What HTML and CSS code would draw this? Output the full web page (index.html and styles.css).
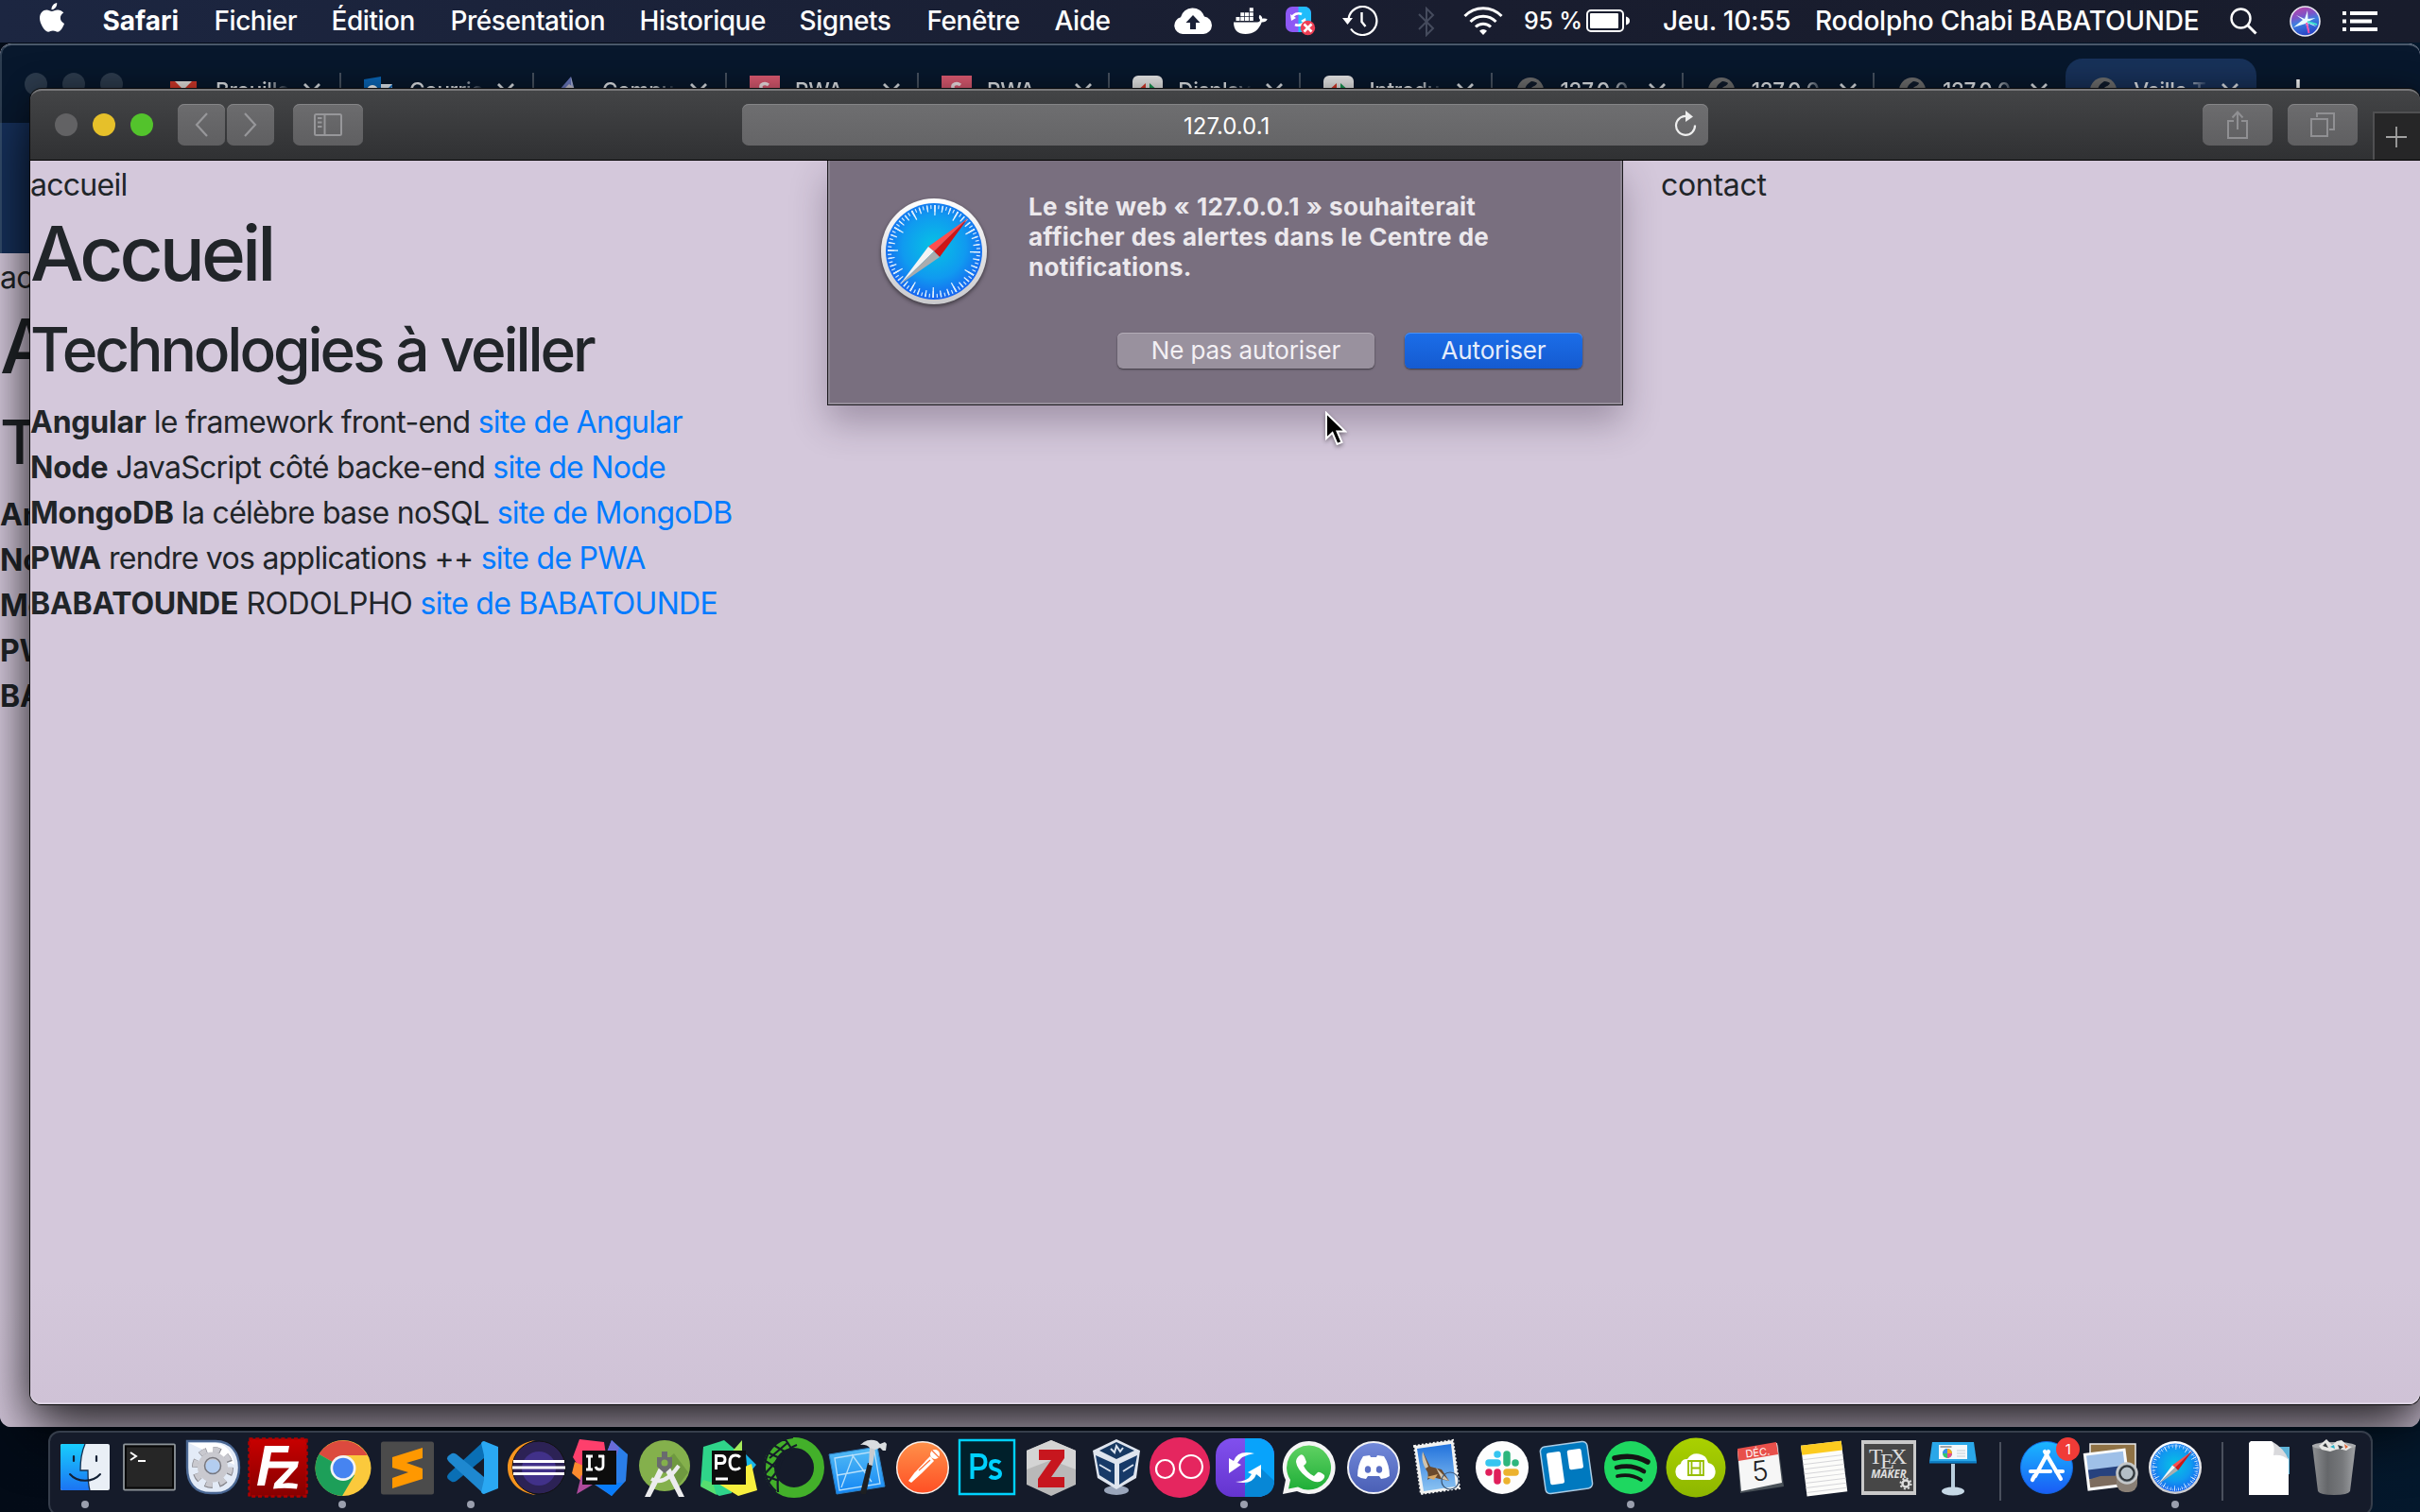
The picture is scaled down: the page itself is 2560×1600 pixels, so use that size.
FILE: index.html
```html
<!DOCTYPE html>
<html lang="fr">
<head>
<meta charset="utf-8">
<title>Veille Technologique</title>
<link rel="stylesheet" href="styles.css">
</head>
<body>
<svg class="defs" width="0" height="0" aria-hidden="true">
  <defs>
    <linearGradient id="gBlue" x1="0" y1="0" x2="0" y2="1"><stop offset="0" stop-color="#1ab7ff"/><stop offset="1" stop-color="#1a5cf5"/></linearGradient>
    <radialGradient id="gSafari" cx=".5" cy=".45" r=".55"><stop offset="0" stop-color="#06c3e4"/><stop offset=".6" stop-color="#109af0"/><stop offset="1" stop-color="#1764f0"/></radialGradient>
    <linearGradient id="gWhite" x1="0" y1="0" x2="0" y2="1"><stop offset="0" stop-color="#fff"/><stop offset="1" stop-color="#c9c9cc"/></linearGradient>
    <linearGradient id="gFinder" x1="0" y1="0" x2="0" y2="1"><stop offset="0" stop-color="#18cdfd"/><stop offset="1" stop-color="#1c74f3"/></linearGradient>
    <linearGradient id="gRed" x1="0" y1="0" x2="0" y2="1"><stop offset="0" stop-color="#c80000"/><stop offset="1" stop-color="#860000"/></linearGradient>
    <linearGradient id="gPost" x1="0" y1="0" x2="0" y2="1"><stop offset="0" stop-color="#ff914a"/><stop offset="1" stop-color="#ff4f24"/></linearGradient>
    <linearGradient id="gWa" x1="0" y1="0" x2="0" y2="1"><stop offset="0" stop-color="#5fd162"/><stop offset="1" stop-color="#1fae38"/></linearGradient>
    <linearGradient id="gDisc" x1="0" y1="0" x2="0" y2="1"><stop offset="0" stop-color="#7289da"/><stop offset="1" stop-color="#4a5fb5"/></linearGradient>
    <linearGradient id="gSky" x1="0" y1="0" x2="0" y2="1"><stop offset="0" stop-color="#2272dc"/><stop offset="1" stop-color="#8cc4f2"/></linearGradient>
    <linearGradient id="gTrash" x1="0" y1="0" x2="1" y2="0"><stop offset="0" stop-color="#8d8f92"/><stop offset=".35" stop-color="#65676a"/><stop offset=".7" stop-color="#77797c"/><stop offset="1" stop-color="#a0a2a5"/></linearGradient>
    <linearGradient id="gPurple" x1="0" y1="0" x2="0" y2="1"><stop offset="0" stop-color="#8150ee"/><stop offset="1" stop-color="#6434cf"/></linearGradient>
    <linearGradient id="gCloud" x1="0" y1="0" x2="0" y2="1"><stop offset="0" stop-color="#aad100"/><stop offset="1" stop-color="#8db600"/></linearGradient>
    <linearGradient id="gXcode" x1="0" y1="0" x2="0" y2="1"><stop offset="0" stop-color="#55bdf5"/><stop offset="1" stop-color="#1386f4"/></linearGradient>
    <linearGradient id="gSiri" x1="0" y1="0" x2=".3" y2="1"><stop offset="0" stop-color="#c8419f"/><stop offset=".4" stop-color="#7d54c8"/><stop offset=".6" stop-color="#3c7fe0"/><stop offset="1" stop-color="#2a49c9"/></linearGradient>
    <symbol id="safari" viewBox="0 0 112 112">
      <circle cx="56" cy="56" r="56" fill="url(#gWhite)"/>
      <circle cx="56" cy="56" r="51" fill="url(#gSafari)"/>
      <circle cx="56" cy="56" r="45.5" fill="none" stroke="#e6f3fd" stroke-width="7" stroke-dasharray="1.3 6.64"/>
      <circle cx="56" cy="56" r="43.5" fill="none" stroke="#e6f3fd" stroke-width="11" stroke-dasharray="1.4 21.38"/>
      <circle cx="56" cy="56" r="47" fill="none" stroke="#d5ebfc" stroke-width="4" stroke-dasharray="1.2 2.9"/>
      <path d="M92 21 50 51 56 56z" fill="#ff4e4e"/><path d="M92 21 62 62 56 56z" fill="#d01515"/>
      <path d="M20 91 50 51 56 56z" fill="#f4f4f4"/><path d="M20 91 62 62 56 56z" fill="#a9acae"/>
    </symbol>
    <symbol id="globe" viewBox="0 0 28 28"><circle cx="14" cy="14" r="14" fill="#6f6f6f"/><path d="M9 16c-2-5 1-9 6-12 3 0 5 1 6 2-1 3-4 3-6 5-1 3 1 5-1 7z" fill="#101b2c"/></symbol>
    <symbol id="close" viewBox="0 0 18 18"><path d="M1 1 17 17M17 1 1 17" stroke="#dfe3e8" stroke-width="2.8"/></symbol>
    <symbol id="sred" viewBox="0 0 32 32"><path fill="#dd5b72" d="M0 0h32v32H0z"/><path d="M20 10c-4-3-9-1-8 3s8 2 8 7-7 5-9 2" fill="none" stroke="#f7e9ec" stroke-width="3.4"/></symbol>
    <symbol id="goog" viewBox="0 0 32 32"><rect width="32" height="32" rx="6" fill="#e9e9e9"/><path d="M4 17 14 8v13z" fill="#d93b2b"/><path d="M28 17 18 8v13z" fill="#1b9a55"/></symbol>
  </defs>
</svg>

<header class="menubar">
  <svg class="apple" viewBox="0 0 26 31"><path d="M18.2 0c.3 2.100-.5 3.900-1.700 5.300-1.200 1.400-2.600 2-4 1.900-.2-2 .6-3.700 1.700-5C15.200.9 17 .1 18.200 0zM25.300 10.600c-2.300 1.400-3.400 3.100-3.400 5.500 0 2.800 1.700 4.800 4.100 5.800-.9 2.800-3.900 8.600-7 8.800-1.900 0-2.700-1.200-5-1.200s-3.200 1.100-5 1.200C5.600 30.900 0 22.200 0 16.300 0 10.500 3.700 7.500 7.300 7.500c2.200 0 4.100 1.400 5.500 1.400S16.800 7.300 19.300 7.500c1.900.1 4.400.9 6 3.100z" fill="#fff"/></svg>
  <span class="app">Safari</span>
  <span>Fichier</span>
  <span>Édition</span>
  <span>Présentation</span>
  <span>Historique</span>
  <span>Signets</span>
  <span>Fenêtre</span>
  <span>Aide</span>
  <svg width="40" height="28" viewBox="0 0 40 28"><path d="M9 28a9 9 0 0 1-2-17.700A13 13 0 0 1 32 9.500 9.300 9.300 0 0 1 31 28z" fill="#fff"/><path d="m20 8 7.500 8H23v7h-6v-7h-4.500z" fill="#1a2036"/></svg>
  <svg width="36" height="28" viewBox="0 0 36 28"><path d="M0 15.500h25c2 0 3-1 3-2.500-1.500-1.500-1.500-3.500-.4-5.200 1.800.9 2.600 2.200 2.700 3.900 2-.6 4-.3 5.400.6-1 2.300-3.300 3.400-6 3.200C26.500 24 21 28 12.500 28 4.500 28 0 24 0 15.500zM2.500 10h4v4h-4zM7.300 10h4v4h-4zM12 10h4v4h-4zM16.800 10h4v4h-4zM7.300 5.200h4v4h-4zM12 5.200h4v4h-4zM16.800 5.200h4v4h-4zM16.800.3h4v4h-4z" fill="#fff"/></svg>
  <svg class="low" width="32" height="32" viewBox="0 0 32 32"><rect width="27" height="27" rx="7" fill="#8d58f5"/><path d="M13.500 0H20a7 7 0 0 1 7 7v13a7 7 0 0 1-7 7h-6.500z" fill="#20bdfb"/><path d="M7 12c1-4 6-6 10-4M20 15c-1 4-6 6-10 4" fill="none" stroke="#fff" stroke-width="2.600"/><path d="m5 8 1 7 5-3zM22 19l-1-7-5 3z" fill="#fff"/><circle cx="23.500" cy="22.500" r="7.700" fill="#ee3f55"/><path d="m19.500 18.500 8 8m0-8-8 8" stroke="#fff" stroke-width="2.600"/></svg>
  <svg width="38" height="32" viewBox="0 0 38 32"><path d="M6.500 14A15 15 0 1 1 9 24.500" fill="none" stroke="#fff" stroke-width="2.200"/><path d="M0 13h11l-5.500 7z" fill="#fff"/><path d="M20.500 7v10l4 5" fill="none" stroke="#fff" stroke-width="2.400"/></svg>
  <svg class="low" width="18" height="32" viewBox="0 0 18 32"><path d="m1 8 15 15-7 7V2l7 7L1 24" fill="none" stroke="#454b5d" stroke-width="2"/></svg>
  <svg width="42" height="30" viewBox="0 0 42 30"><g fill="none" stroke="#fff" stroke-width="3"><path d="M1.500 10a27 27 0 0 1 39 0M7.500 16a19 19 0 0 1 27 0M13 21.500a11.500 11.500 0 0 1 16 0"/></g><path d="m21 30-4-4.200a5.500 5.500 0 0 1 8 0z" fill="#fff"/></svg>
  <span class="pct">95 %</span>
  <svg width="47" height="24" viewBox="0 0 47 24"><rect x="1" y="1" width="38" height="22" rx="4" fill="none" stroke="#fff" stroke-width="2"/><rect x="4" y="4" width="30" height="16" rx="1" fill="#fff"/><path d="M42 7.500c3 .5 4 2.500 4 4.500s-1 4-4 4.500z" fill="#fff"/></svg>
  <span class="clock">Jeu. 10:55</span>
  <span class="user">Rodolpho Chabi BABATOUNDE</span>
  <svg width="29" height="29" viewBox="0 0 29 29"><circle cx="11.500" cy="11.500" r="10" fill="none" stroke="#fff" stroke-width="2.400"/><path d="m18.500 18.500 9 9" stroke="#fff" stroke-width="3"/></svg>
  <svg width="33" height="33" viewBox="0 0 33 33"><circle cx="16.500" cy="16.500" r="15.500" fill="url(#gSiri)" stroke="#e9e9f2" stroke-width="1.600"/><path d="m4 23 10-8-7-5 9 4 3-9 .5 9 8-1-7 3.500 8 6-9-4 1.500 11-4-10.500z" fill="#e8fbff"/><path d="m18 18 2.500 11" stroke="#f04fb0" stroke-width="2" fill="none"/><path d="m19 17 10 3" stroke="#3fe0d0" stroke-width="2" fill="none"/></svg>
  <svg width="37" height="21" viewBox="0 0 37 21"><path d="M0 0h4v4H0zM0 8.500h4v4H0zM0 17h4v4H0zM8 0h29v4H8zM8 8.500h23v4H8zM8 17h29v4H8z" fill="#fff"/></svg>
</header>

<section class="win back">
  <div class="tabbar">
    <div class="lights"><i></i><i></i><i></i></div>
    <div class="tabs">
      <div class="tab"><svg class="fav low2" viewBox="0 0 28 22"><path fill="#e8e4e0" d="M0 0h28v22H0z"/><path d="M0 0h5l9 9 9-9h5v22h-5V8l-9 9-9-9v14H0z" fill="#d5392b"/></svg><span>Brouillo</span><svg class="x"><use href="#close"/></svg></div>
      <div class="tab"><svg class="fav out" viewBox="0 0 30 30"><path d="M12 8h18v16H12z" fill="#e8eef5"/><path d="m14 9 8 7 8-8v3l-8 8-8-7z" fill="#1b74c8"/><path d="M0 3 18 0v30L0 27z" fill="#0a67b8"/><circle cx="9" cy="15" r="4.500" fill="none" stroke="#fff" stroke-width="3"/></svg><span>Courrie</span><svg class="x"><use href="#close"/></svg></div>
      <div class="tab"><svg class="fav out" viewBox="0 0 30 30"><path d="M15 0v14L2 15z" fill="#6a78bd"/><path d="M15 0v18l4-3z" fill="#a6b0de"/><path d="m9 12 4-4 8 6v3H6z" fill="#c9c5d0"/></svg><span>Compu</span><svg class="x"><use href="#close"/></svg></div>
      <div class="tab"><svg class="fav sq"><use href="#sred"/></svg><span>PWA</span><svg class="x"><use href="#close"/></svg></div>
      <div class="tab"><svg class="fav sq"><use href="#sred"/></svg><span>PWA</span><svg class="x"><use href="#close"/></svg></div>
      <div class="tab"><svg class="fav sq"><use href="#goog"/></svg><span>Display</span><svg class="x"><use href="#close"/></svg></div>
      <div class="tab"><svg class="fav sq"><use href="#goog"/></svg><span>Introdu</span><svg class="x"><use href="#close"/></svg></div>
      <div class="tab"><svg class="fav gl"><use href="#globe"/></svg><span>127.0.0</span><svg class="x"><use href="#close"/></svg></div>
      <div class="tab"><svg class="fav gl"><use href="#globe"/></svg><span>127.0.0</span><svg class="x"><use href="#close"/></svg></div>
      <div class="tab"><svg class="fav gl"><use href="#globe"/></svg><span>127.0.0</span><svg class="x"><use href="#close"/></svg></div>
      <div class="tab on"><svg class="fav gl"><use href="#globe"/></svg><span>Veille T</span><svg class="x"><use href="#close"/></svg></div>
    </div>
    <svg class="newtab" viewBox="0 0 24 24"><path d="M12 0v24M0 12h24" stroke="#fff" stroke-width="3.500"/></svg>
  </div>
  <div class="toolbar"></div>
  <div class="page">
    <p class="nav">accueil</p>
    <h1>Accueil</h1>
    <h2>Technologies</h2>
    <ul><li><b>Angular</b></li><li><b>Node</b></li><li><b>MongoDB</b></li><li><b>PWA</b></li><li><b>BABATOUNDE</b></li></ul>
  </div>
</section>

<section class="win front">
  <div class="titlebar">
    <div class="lights"><i></i><i class="y"></i><i class="g"></i></div>
    <div class="btns">
      <div class="btn back-b"><svg width="14" height="26" viewBox="0 0 14 26"><path d="M13 1 2 13l11 12" fill="none" stroke="#97979a" stroke-width="2.200"/></svg></div>
      <div class="btn fwd"><svg width="14" height="26" viewBox="0 0 14 26"><path d="m1 1 11 12L1 25" fill="none" stroke="#97979a" stroke-width="2.200"/></svg></div>
    </div>
    <div class="btn side"><svg width="30" height="24" viewBox="0 0 30 24"><rect x="1" y="1" width="28" height="22" rx="1.500" fill="none" stroke="#97979a" stroke-width="2"/><path d="M11.500 1v22M4 5h4.500M4 9.500h4.500M4 14h4.500" stroke="#97979a" stroke-width="2"/></svg></div>
    <div class="url"><span>127.0.0.1</span><svg width="24" height="28" viewBox="0 0 24 28"><path d="M13.500 6A10 10 0 1 0 22 15.500" fill="none" stroke="#eee" stroke-width="2.200"/><path d="M12 0v12l8-5.500z" fill="#eee"/></svg></div>
    <div class="btn share"><svg width="24" height="30" viewBox="0 0 24 30"><path d="M8 11H2v18h20V11h-6M12 20V2M6.500 7.500 12 1.500l5.500 6" fill="none" stroke="#909093" stroke-width="2"/></svg></div>
    <div class="btn share"><svg width="26" height="26" viewBox="0 0 26 26"><path d="M1 7h17v18H1zM7 5V1h18v17h-5" fill="none" stroke="#909093" stroke-width="2"/></svg></div>
    <div class="plus"><svg width="22" height="22" viewBox="0 0 22 22"><path d="M11 0v22M0 11h22" stroke="#a2a2a2" stroke-width="1.800"/></svg></div>
  </div>
  <div class="page">
    <div class="navrow"><p class="nav">accueil</p><p class="nav">contact</p></div>
    <h1>Accueil</h1>
    <h2>Technologies à veiller</h2>
    <ul>
      <li><b>Angular</b> le framework front-end <a>site de Angular</a></li>
      <li><b>Node</b> JavaScript côté backe-end <a>site de Node</a></li>
      <li><b>MongoDB</b> la célèbre base noSQL <a>site de MongoDB</a></li>
      <li><b>PWA</b> rendre vos applications ++ <a>site de PWA</a></li>
      <li><b>BABATOUNDE</b> <span class="caps">RODOLPHO</span> <a>site de BABATOUNDE</a></li>
    </ul>
  </div>
  <div class="sheetclip">
    <div class="sheet">
      <svg class="logo"><use href="#safari"/></svg>
      <div class="msg">
        <p>Le site web « 127.0.0.1 » souhaiterait<br>afficher des alertes dans le Centre de<br>notifications.</p>
        <div class="acts"><div class="deny">Ne pas autoriser</div><div class="allow">Autoriser</div></div>
      </div>
    </div>
  </div>
</section>

<svg class="cursor" viewBox="0 0 24 38"><path d="M2 2v27l6.500-6 5 12 5-2-5-11.500H22z" fill="#000" stroke="#fff" stroke-width="2"/></svg>

<footer class="dock">
  <div class="it run"><svg viewBox="0 0 64 64"><rect x="6" y="7" width="52" height="49" rx="2" fill="#e9eff6"/><path d="M8 7h24c-4 9-5 18-5 28h8c0 8 0 14 2 21H8a2 2 0 0 1-2-2V9a2 2 0 0 1 2-2z" fill="url(#gFinder)"/><path d="M32 7c-4 9-5 18-5 28h8c0 8 0 14 2 21" fill="none" stroke="#17304f" stroke-width="1.300"/><path d="M20 20v5M44 20v5" stroke="#122034" stroke-width="2.200" stroke-linecap="round"/><path d="M16 39c8 9 24 9 32 0" fill="none" stroke="#122034" stroke-width="2" stroke-linecap="round"/></svg></div>
  <div class="it"><svg viewBox="0 0 64 64"><rect x="5" y="7.500" width="54" height="48" rx="1" fill="#262626" stroke="#8d9499" stroke-width="1.800"/><rect x="7" y="9.500" width="50" height="44" fill="none" stroke="#080808" stroke-width="2"/><path d="m12 16 6 4-6 4M20 25h8" fill="none" stroke="#fff" stroke-width="2"/></svg></div>
  <div class="it"><svg viewBox="0 0 64 64"><path d="M4 4h30c16 0 25 12 25 28S49 59 35 59h-6C12 59 4 48 4 32z" fill="#e3ebf7" stroke="#4a6793" stroke-width="2.400"/><path d="M6 6l48 23c-2-15-10-23-22-23z" fill="#fff"/><circle cx="31" cy="32" r="19" fill="none" stroke="#85858b" stroke-width="6" stroke-dasharray="8 6.920"/><circle cx="31" cy="31.500" r="18.500" fill="none" stroke="#c9c9cf" stroke-width="5.500" stroke-dasharray="7 7.530"/><circle cx="31" cy="31.500" r="12" fill="#b3cdf0" stroke="#c9c9cf" stroke-width="8"/><circle cx="31" cy="30" r="8.500" fill="none" stroke="#77777e" stroke-width="1.500"/></svg></div>
  <div class="it"><svg viewBox="0 0 64 64"><rect x="1.500" y="1.500" width="61" height="61" fill="url(#gRed)" stroke="#b00000" stroke-width="2.500" stroke-dasharray="4 2.780"/><path d="M10 51 18 9h26l-1.200 7H25l-1.700 9.500H54l-1.300 6L37 49q6-1.500 16 .500l-1 5q-14-1.500-25 0l1.300-6L44 32.500H22L18 51z" fill="#fff"/></svg></div>
  <div class="it run"><svg viewBox="0 0 64 64"><circle cx="32" cy="32.500" r="29.500" fill="#fbc93c"/><path d="M32 32.500 6.500 17.700A29.500 29.500 0 0 1 57.600 19H32z" fill="#dc4a3e"/><path d="M32 32.500 6.500 17.700A29.500 29.500 0 0 0 31 62l13-22z" fill="#1d9f59"/><circle cx="32" cy="32.500" r="13.500" fill="#f4f4f4"/><circle cx="32" cy="32.500" r="10.800" fill="#4684f1"/></svg></div>
  <div class="it"><svg viewBox="0 0 64 64"><rect x="4" y="4.500" width="56" height="56" rx="2.500" fill="#4b4b4b"/><path d="m48 11-32 10v11l17 5-17 6v11l32-10V33l-17-6 17-5z" fill="#ff9800"/></svg></div>
  <div class="it run"><svg viewBox="0 0 64 64"><path d="M45 4 8 38q-4 4 0 7l3 2q2 1 5-1L45 22z" fill="#0a6fb5"/><path d="M45 60 8 26q-4-4 0-7l3-2q2-1 5 1l29 24z" fill="#1e88d0"/><path d="M45 4 60 10v44l-15 6q-2 0-3-2l3-13V19L42 6q1-2 3-2z" fill="#2aa8f2"/></svg></div>
  <div class="it"><svg viewBox="0 0 64 64"><path d="M32 3C-8 8-8 56 32 61 4 54 4 10 32 3z" fill="#f7941e"/><circle cx="35" cy="32" r="28" fill="#2c2255" stroke="#111" stroke-width="1"/><circle cx="35" cy="33" r="18" fill="#413189"/><path d="M8 25.500h54M7 32h56M8 38.500h54" stroke="#fff" stroke-width="3"/></svg></div>
  <div class="it"><svg viewBox="0 0 64 64"><path d="m10 2 26 3 3 20-26 12-10-16z" fill="#fe3f6c"/><path d="m44 3 17 15-2 28-15 16-18-12z" fill="#2a7ee8"/><path d="m44 3 8 8-4 12H36z" fill="#6a6bd8"/><path d="M5 26 2 38l12 10V30z" fill="#fc8a2e"/><path d="m12 40-5 20 22-13z" fill="#af4b9c"/><path d="m26 48 18 14 12-14z" fill="#087cfa"/><path d="M13 14h36v36H13z" fill="#0d0d0d"/><path d="M17 20h7M17 34h7M20.500 20v14M35 19v11q0 4-4 4-3 0-4-3M30 20h6M17 44h12" fill="none" stroke="#fff" stroke-width="2.800"/></svg></div>
  <div class="it"><svg viewBox="0 0 64 64"><circle cx="32" cy="30" r="27" fill="#84b04c"/><path d="m34 24 8-7 15 20-12 16z" fill="#6f9940"/><path d="M11 63 29 26l6 0 18 37h-6L32 34 17 63z" fill="#ececee"/><path d="M18 44q14 8 29-14" fill="none" stroke="#ececee" stroke-width="4"/><path d="M29 15h6v6h5v10l-8 7-8-7V21h5z" fill="#6a6b6e"/><circle cx="32" cy="27" r="3.500" fill="#84b04c"/></svg></div>
  <div class="it"><svg viewBox="0 0 64 64"><path d="m5 10 22-7 14 12-6 44-13 3L2 51z" fill="#2fd48a"/><path d="m46 3-14 16 14 10z" fill="#a6ea5a"/><path d="m50 18 11 11-9 11z" fill="#16b6e8"/><path d="M16 46 56 28l6 28-20 6z" fill="#f7ef3e"/><path d="m5 45 10 3 4 13L2 52z" fill="#57de70"/><path d="M14 14h36v36H14z" fill="#0d0d0d"/><path d="M18.500 34V19.500H24q4 0 4 4t-4 4h-5M44 21q-2-2-5-2-6 0-6 7.500t6 7.500q3 0 5-2M18 44h13" fill="none" stroke="#fff" stroke-width="3"/></svg></div>
  <div class="it"><svg viewBox="0 0 64 64"><circle cx="32" cy="32" r="26.500" fill="none" stroke="#43b02a" stroke-width="11"/><path d="M31 0A32 32 0 0 0 13 57M35 8Q12 16 15 58M0 24l16 10M4 16l17 8M10 8l17 10M22 1l8 12M0 40l16 6M26 5 6 22M18 20 0 40M14 36 3 50" fill="none" stroke="#151b2a" stroke-width="2.200"/></svg></div>
  <div class="it"><svg viewBox="0 0 64 64"><path d="m1 18 51-8 8 42-51 8z" fill="url(#gXcode)" stroke="#2b7fc4"/><path d="m27 18-13 35M25 18l21 29M10 40l34-6M7 22l42-7 6 34-43 7z" fill="none" stroke="#b7e0fb" stroke-width="1.300"/><path d="m42 27 5 1-7 32q-4 1-6-1z" fill="#1d1f22"/><path d="m44 10 6 1-3 19-4-1z" fill="#c8ccd0"/><path d="M34 8q8-8 18-4l3 3 5-2 2 2-1 7h-3l-3-3-5 2-6-2q-4-4-10-3z" fill="#dadde0"/></svg></div>
  <div class="it"><svg viewBox="0 0 64 64"><circle cx="32" cy="32" r="27.300" fill="url(#gPost)" stroke="#f9efe9" stroke-width="1.500"/><circle cx="45" cy="18" r="5" fill="#fff"/><path d="M40 20 26 34 17 46l3 2 11-10 13-13z" fill="#fff"/><path d="m42 14 7 7M28 35l12-11M24 36l10-11" stroke="#ff7038" stroke-width="1.200"/></svg></div>
  <div class="it"><svg viewBox="0 0 64 64"><path d="M3 3h58v57H3z" fill="#00202b" stroke="#00d2ff" stroke-width="2.400"/><path d="M16.500 44V19h7q7 0 7 7t-7 7h-7M46 27q-2-2-5-2-5 0-5 4t5 5 5 4.500-5 4.500q-4 0-6-2" fill="none" stroke="#00d2ff" stroke-width="4"/></svg></div>
  <div class="it"><svg viewBox="0 0 64 64"><path d="m32 3 26 11v36L32 62 6 50V14z" fill="#b9b9b9"/><path d="m32 3 26 11v20L32 24 6 34V14z" fill="#d4d4d4"/><path d="M19 13h27v9L32 42h14v11H18v-9l14-20H19z" fill="#c7161e"/></svg></div>
  <div class="it"><svg viewBox="0 0 64 64"><ellipse cx="33" cy="56" rx="13" ry="5" fill="#9aa6bb"/><path d="m33 2 25 12-4 29-21 12-20-12L8 14z" fill="#dfe5ee"/><path d="m33 5 19 9-19 9-18-9z" fill="#173861"/><path d="m11 19 20 9v22L15 40zM55 19l-19 9v22l15-10z" fill="#173a68"/><path d="m27 12 4 4 2-7 4 6 3-4M15 29l12 7M40 36l11-7" fill="none" stroke="#d9e2ee" stroke-width="2"/></svg></div>
  <div class="it"><svg viewBox="0 0 64 64"><circle cx="32" cy="32" r="32" fill="#e5265f"/><circle cx="16.500" cy="33.500" r="9.500" fill="none" stroke="#fff" stroke-width="2.200"/><circle cx="44" cy="31" r="12" fill="none" stroke="#fff" stroke-width="2.200"/></svg></div>
  <div class="it run"><svg viewBox="0 0 64 64"><rect x="1" y="1" width="62" height="62" rx="18" fill="url(#gPurple)"/><path d="M32 1h13a18 18 0 0 1 18 18v26a18 18 0 0 1-18 18H32z" fill="#08a3fb"/><path d="m49 33 14 13q0 16-18 17h-13V51z" fill="#0787d6"/><path d="M42 17Q24 13 20 25l-5-3v16l13-9-4-2q4-8 18-10zM22 47q18 4 22-8l5 4V29l-14 8 4 2q-4 8-17 8z" fill="#fff"/></svg></div>
  <div class="it"><svg viewBox="0 0 64 64"><path d="M32 4a28 28 0 1 1-13 53L4 60l3-15A28 28 0 0 1 32 4z" fill="#f5f5f5"/><path d="M32 8.500a23.500 23.500 0 1 1-12 44l-10 2 2-9.500A23.500 23.500 0 0 1 32 8.500z" fill="url(#gWa)"/><path d="M22 19q3-2 5 2l2 5q0 2-3 4 3 7 11 11l4-4q2-1 7 3 1 3-3 6-6 4-16-4T18 26q0-4 4-7z" fill="#fff"/></svg></div>
  <div class="it"><svg viewBox="0 0 64 64"><circle cx="32" cy="32" r="27" fill="url(#gDisc)" stroke="#f2f2f5" stroke-width="2"/><path d="m21 20 7-1 1 2h6l1-2 7 1q6 9 6 21-4 3-9 3l-2-3H26l-2 3q-5 0-9-3 0-12 6-21z" fill="#fff"/><ellipse cx="26" cy="34" rx="3.200" ry="3.800" fill="#5c70c5"/><ellipse cx="38" cy="34" rx="3.200" ry="3.800" fill="#5c70c5"/></svg></div>
  <div class="it"><svg viewBox="0 0 64 64"><path d="m7 9 41-6 7 51-41 6z" fill="#f3f3f1" stroke="#f3f3f1" stroke-width="2" stroke-dasharray="2 2"/><path d="m10 12 36-5 5 45-34 5z" fill="url(#gSky)"/><path d="m16 15 8 16 12 3 8 12-10-2-8-2-5 3q2-7-2-12z" fill="#6b4a2c"/><path d="m16 15 6 16-3 2q-5-8-3-18zM30 32l14 14-8-2z" fill="#cfc3ae"/><path d="m20 42 12-3-4 6z" fill="#d8a968"/><circle cx="45" cy="46" r="9" fill="none" stroke="#3b5675" stroke-width="1.200"/></svg></div>
  <div class="it"><svg viewBox="0 0 64 64"><circle cx="32" cy="32" r="28" fill="#fdfdfd"/><g stroke-width="7.500" stroke-linecap="round"><path d="M18 27h9" stroke="#36c5f0"/><path d="M27 18v.1" stroke="#36c5f0"/><path d="M37 18v9" stroke="#2eb67d"/><path d="M46 27v.1" stroke="#2eb67d"/><path d="M37 37h9" stroke="#ecb22e"/><path d="M37 46v.1" stroke="#ecb22e"/><path d="M27 37v9" stroke="#e01e5a"/><path d="M18 37v.1" stroke="#e01e5a"/></g></svg></div>
  <div class="it"><svg viewBox="0 0 64 64"><g transform="rotate(-8 32 32)"><rect x="7" y="7" width="50" height="50" rx="5" fill="#0079bf" stroke="#a9cbe4" stroke-width="1.500"/><rect x="13" y="14" width="15" height="34" rx="2" fill="#fff"/><rect x="35" y="14" width="15" height="21" rx="2" fill="#fff"/></g></svg></div>
  <div class="it run"><svg viewBox="0 0 64 64"><circle cx="32" cy="32" r="28" fill="#1ed760"/><g fill="none" stroke="#141414" stroke-linecap="round"><path d="M15 22q19-5 35 4" stroke-width="5.500"/><path d="M17 32q16-4 29 4" stroke-width="4.600"/><path d="M18 41q14-3 25 4" stroke-width="3.800"/></g></svg></div>
  <div class="it"><svg viewBox="0 0 64 64"><circle cx="32" cy="32" r="31.500" fill="url(#gCloud)"/><path d="M17 45a9 9 0 0 1-1-17 6 6 0 0 1 7-5 12 12 0 0 1 22 4 9.500 9.500 0 0 1 2 18z" fill="#fff"/><path d="M24 25h16v15H24zM27.500 25v15M36.500 25v15M27.500 32.500h9" fill="none" stroke="#97be04" stroke-width="1.800"/></svg></div>
  <div class="it"><svg viewBox="0 0 64 64"><path d="m8 16 3 43 46-7-6-44z" fill="#4a5259"/><path d="m8 14 42-8 5 42-43 9z" fill="#f6f6f6"/><path d="m8 12 41-7 2 13-42 7z" fill="#e8504b"/><g transform="rotate(-7 30 30)"><text x="31" y="20" class="t-mon">DÉC.</text><text x="31" y="46" class="t-day">5</text></g></svg></div>
  <div class="it"><svg viewBox="0 0 64 64"><g transform="rotate(-7 32 32)"><path d="M10 6h43v54H10z" fill="#fcfcfa"/><path d="M10 6h43v10H10z" fill="#fccb1f"/><path d="M10 21h43M10 26h43M10 31h43M10 36h43M10 41h43M10 46h43M10 51h43M10 56h43" stroke="#d5d5d8" stroke-width="1"/></g></svg></div>
  <div class="it"><svg viewBox="0 0 64 64"><path d="M3 3h58v58H3z" fill="#c9c9c9"/><path d="M6 7h52v50H6z" fill="#474747"/><text x="11" y="28" class="t-tex">T</text><text x="23" y="33" class="t-tex">E</text><text x="34" y="28" class="t-tex">X</text><text x="32" y="42.500" class="t-mak">MAKER</text><circle cx="50" cy="49" r="3.500" fill="none" stroke="#ddd" stroke-width="2.500"/><circle cx="50" cy="49" r="5.500" fill="none" stroke="#ddd" stroke-width="2" stroke-dasharray="2 2.300"/></svg></div>
  <div class="it"><svg viewBox="0 0 64 64"><path d="M30 28h4v30h-4z" fill="#b9cedd"/><ellipse cx="32" cy="57" rx="12" ry="4.500" fill="#c6d8e5"/><path d="M10 5h44l3 21H7z" fill="#2aa7e8"/><path d="M7 25h50v2.500H7z" fill="#0f7fc4"/><path d="M17 8h30v15H17z" fill="#f4f8fb"/><path d="M18.500 10h12" stroke="#555" stroke-width="1"/><circle cx="26" cy="17" r="5" fill="#35c46e"/><path d="M26 17v-5a5 5 0 0 1 5 5z" fill="#f5a623"/><path d="M26 17h5a5 5 0 0 1-5 5z" fill="#e84a8f"/><path d="M26 17h-5a5 5 0 0 1 5-5z" fill="#3a8ef0"/><path d="M36 14h9M36 17h9M36 20h9" stroke="#c5cdd4" stroke-width="1"/></svg></div>
  <div class="sep"></div>
  <div class="it"><svg viewBox="0 0 64 64"><circle cx="32" cy="32" r="27.500" fill="url(#gBlue)" stroke="#1266e0"/><path d="M34 15 20 41M30 15l17 29M15 36h21M42 36h7M19 41l-2 4" stroke="#fff" stroke-width="4.200" stroke-linecap="round"/></svg><span class="badge">1</span></div>
  <div class="it"><svg viewBox="0 0 64 64"><path d="M10 7h48v38H10z" fill="#8f7245" stroke="#ececec" stroke-width="1.500"/><g transform="rotate(-7 28 34)"><path d="M5 14h45v40H5z" fill="#fafafa"/><path d="M8 17h39v16H8z" fill="#9fc0e8"/><path d="M8 32h39v10H8z" fill="#27427e"/><path d="m8 42 12-2 27 3v8H8z" fill="#7d6c5e"/></g><rect x="38" y="32" width="22" height="26" rx="9" fill="#8a8076"/><circle cx="49" cy="38" r="10.500" fill="#77838b" stroke="#c5c8ca" stroke-width="2.500"/><circle cx="49" cy="38" r="7.500" fill="#b4bfc6" stroke="#2e3438" stroke-width="2"/></svg></div>
  <div class="it run"><svg viewBox="0 0 64 64"><use href="#safari" x="4" y="4" width="56" height="56"/></svg></div>
  <div class="sep"></div>
  <div class="it"><svg viewBox="0 0 64 64"><path d="M10 10h43v29H10z" fill="#5eb3d8"/><path d="M12 4h22l18 19v38H10V6z" fill="#fff"/><path d="M34 4q4 5 2 15 10-1 16 5-4-12-18-20z" fill="#d9d9dc"/></svg></div>
  <div class="it"><svg viewBox="0 0 64 64"><path d="m9 8 6 49q2 4 17 4t17-4l6-49z" fill="url(#gTrash)"/><ellipse cx="32" cy="9" rx="23" ry="4" fill="#a7a9ac"/><path d="m16 9 8-7 6 6 5-4 5-1 7 6 4 1-6 4-8-2-9 3-9-2z" fill="#e6e6e4"/><path d="m20 9 3-3 3 5zM36 8l6 2-4 3z" fill="#34393d"/><path d="m28 10 4-2 1 4z" fill="#2ab3c9"/><path d="m43 7 4 3-3 2z" fill="#e0683b"/></svg></div>
</footer>
</body>
</html>
```

FILE: styles.css
```css
* { box-sizing: border-box; margin: 0; padding: 0; }
body {
  width: 2560px; height: 1600px; overflow: hidden; position: relative;
  background: linear-gradient(90deg, #030b17, #050d1a 50%, #04182c);
  font-family: Inter, "Liberation Sans", sans-serif;
}
.defs { position: absolute; }
svg { display: block; flex: none; }

.menubar {
  height: 45px; padding-bottom: 1px; color: #fff; font-size: 28px; line-height: 44px; white-space: nowrap; font-weight: 500; letter-spacing: -.45px;
  background: linear-gradient(90deg, #1c2641, #191d2f 60%, #181c2c);
  display: grid; align-items: center;
  grid-template-columns: 108.5px 118px 124px 126px 200px 169px 135px 135px 126.5px 63px 55px 60px 80px 48px 64px 66px 81px 161px 439px 63px 56px 82px;
}
.apple { width: 26px; height: 31px; margin: -7px 0 0 42px; }
.menubar .low { margin-top: 2px; }
.menubar .app { font-weight: 700; letter-spacing: 0; }
.menubar .pct { font-size: 25px; letter-spacing: -.2px; }
.menubar .clock { letter-spacing: -.25px; }
.menubar .user { letter-spacing: -.2px; }

.lights { display: flex; gap: 16px; }
.lights i { width: 24px; height: 24px; border-radius: 50%; background: #626264; }
.lights .y { background: #e6c02a; }
.lights .g { background: #53c32c; }

.win { position: absolute; display: flex; flex-direction: column; overflow: hidden; }
.back { left: 0; top: 46px; width: 2560px; height: 1464px; border-radius: 12px; background: #d4c8db; }
.tabbar {
  height: 84px; display: flex; padding: 0 0 0 26px; border-top: 2px solid #49586a; border-left: 2px solid #2d3d50;
  background: #08182d; border-radius: 12px 12px 0 0;
}
.tabbar .lights { width: 131px; margin: 29px 0 0 -2px; }
.tabbar .lights i { background: #2d3c4e; }
.tabs { display: grid; grid-template-columns: 204px 204px 204px 203px repeat(7, 202.2px); margin-top: 14px; }
.tab { display: flex; height: 90px; position: relative; font-size: 22.5px; font-weight: 500; color: #e4e7eb; padding-left: 24px; border-radius: 18px; }
.tab::after { content: ""; position: absolute; right: 0; top: 15px; width: 2px; height: 50px; background: #46515f; }
.tab:nth-child(n+10)::after { display: none; }
.tab.on { background: #18325a; }
.tab span { width: 82px; height: 34px; margin: 17px 11px 0 18px; white-space: nowrap; line-height: 34px; letter-spacing: -.3px; -webkit-mask-image: linear-gradient(90deg, #000 65%, transparent 96%); mask-image: linear-gradient(90deg, #000 65%, transparent 96%); }
.fav { width: 30px; height: 30px; margin-top: 20px; }
.low2 { width: 28px; height: 22px; margin: 24px 2px 0 -1px; }
.out { margin-top: 19px; }
.sq { width: 32px; height: 32px; margin-top: 18px; margin-right: -2px; }
.gl { width: 28px; height: 28px; margin: 20px 0 0 2px; }
.x { width: 18px; height: 18px; margin-top: 26px; }
.newtab { width: 24px; height: 24px; margin: 36px 0 0 32px; }
.toolbar { height: 138px; background: #16305a; border-left: 2px solid #334c6b; }

.page { flex: 1; padding-top: 2px; color: #212529; font-size: 32px; line-height: 48px; letter-spacing: -.72px; white-space: nowrap; background: linear-gradient(#d4c8db 90%, #cfc2d6); }
.page h1 { font-size: 80px; font-weight: 550; line-height: 96px; margin-bottom: 16px; letter-spacing: -3.9px; }
.page h2 { font-size: 64px; font-weight: 550; line-height: 76.8px; margin-bottom: 14px; letter-spacing: -3.1px; }
.page ul { list-style: none; }
.page b { font-weight: 700; letter-spacing: -.25px; }
.page .caps { letter-spacing: -.45px; }
.page a { color: #007bff; }
.navrow { display: grid; grid-template-columns: 1725px 1fr; }
.navrow .nav + .nav { letter-spacing: -.3px; }

.front {
  left: 32px; top: 94px; width: 2528px; height: 1392px; border-radius: 12px; overflow: visible;
  box-shadow: 0 0 0 1px #0b0b0c, 0 30px 60px rgba(0, 0, 0, .75), 0 0 30px rgba(0, 0, 0, .3);
}
.titlebar {
  height: 76px; display: flex; background: linear-gradient(#434446, #303133); border-top: 2px solid #78787a;
  border-bottom: 1px solid #000; border-radius: 12px 12px 0 0; padding-left: 26px;
}
.titlebar .lights { width: 130px; margin-top: 24px; }
.btn { height: 44px; margin-top: 14px; border-radius: 7px; background: linear-gradient(#6c6c6e, #5f5f61); box-shadow: inset 0 1px 0 #858587; display: flex; align-items: center; justify-content: center; }
.btns { display: flex; gap: 2px; width: 122px; }
.back-b, .fwd { width: 50px; }
.side { width: 74px; margin-right: 401px; }
.url { width: 1022px; height: 44px; margin: 14px 523px 0 0; border-radius: 7px; background: linear-gradient(#6e6e70, #656567); box-shadow: inset 0 1px 0 #858587; color: #fff; font-size: 24px; line-height: 48px; display: flex; padding-left: 467px; }
.url span { width: 519px; letter-spacing: 0; }
.url svg { margin-top: 7px; }
.share { width: 74px; margin-right: 16px; }
.share + .share { margin-right: 16px; }
.plus { flex: 1; margin-top: 22px; padding-right: 2px; background: #262627; border: 2px solid #505052; border-width: 2px 0 0 2px; display: flex; align-items: center; justify-content: center; }
.front .page { border-radius: 0 0 12px 12px; box-shadow: inset 0 -2px 0 #dcd2e2; }

.sheetclip { position: absolute; left: 783px; top: 76px; width: 962px; height: 340px; overflow: hidden; }
.sheet {
  width: 842px; height: 259px; margin: 0 60px; background: #796f7f; border: 1px solid #1c1a1e; border-top: 0; display: flex; padding: 32px 40px 0 54px;
  box-shadow: inset 0 -2px 0 #938c98, inset 2px 0 0 #8b8491, inset -2px 0 0 #8b8491, 0 18px 36px rgba(50, 35, 60, .32);
}
.logo { width: 112px; height: 112px; margin: 8px 0 0 2px; filter: drop-shadow(0 2px 2px rgba(0, 0, 0, .5)); }
.msg { margin-left: 44px; flex: 1; }
.msg p { color: #ebe8ec; font-weight: 700; font-size: 26px; line-height: 32px; height: 150px; padding-top: 1px; white-space: nowrap; letter-spacing: .28px; word-spacing: .5px; }
.acts { display: flex; gap: 32px; margin-left: 94px; font-size: 26px; line-height: 38px; text-align: center; letter-spacing: -.15px; }
.deny { width: 272px; height: 38px; border-radius: 6px; background: #99919e; color: #f3f0f4; box-shadow: inset 0 1px 0 #b3acb7, 0 1px 2px rgba(0, 0, 0, .5); }
.allow { width: 188px; height: 38px; border-radius: 6px; background: linear-gradient(#1b6ee9, #155bd0); color: #e5edfb; box-shadow: inset 0 1px 0 #4f92f2, 0 1px 2px rgba(0, 0, 0, .5); }

.cursor { position: absolute; left: 1401px; top: 435px; width: 24px; height: 38px; filter: drop-shadow(0 2px 2px rgba(0, 0, 0, .4)); }

.dock {
  position: absolute; left: 51px; top: 1514px; width: 2459px; height: 90px; border: 2px solid #363e4b; border-radius: 12px; background: #151b2a;
  display: grid; padding: 5px 0 0 3px; align-items: start;
  grid-template-columns: repeat(30, 68.15px) 31px repeat(3, 68px) 32px repeat(2, 68px);
}
.it { position: relative; width: 68px; height: 76px; display: flex; justify-content: center; }
.it svg { width: 64px; height: 64px; }
.run::after { content: ""; position: absolute; left: 29.5px; top: 67px; width: 8px; height: 8px; border-radius: 50%; background: #9a9fae; }
.sep { width: 2px; height: 62px; margin: 5px 0 0 15px; background: #4a505d; }
.badge { position: absolute; right: -1px; top: 0; width: 25px; height: 25px; border-radius: 50%; background: #f03b37; color: #fff; font-size: 15px; line-height: 25px; text-align: center; }
.t-mon { font: 11px Inter, sans-serif; fill: #fff; text-anchor: middle; }
.t-day { font: 300 29px Inter, sans-serif; fill: #222; text-anchor: middle; }
.t-tex { font: 24px "Liberation Serif", serif; fill: #ddd; }
.t-mak { font: italic bold 11.500px "Open Sans", sans-serif; fill: #ddd; text-anchor: middle; }
```
